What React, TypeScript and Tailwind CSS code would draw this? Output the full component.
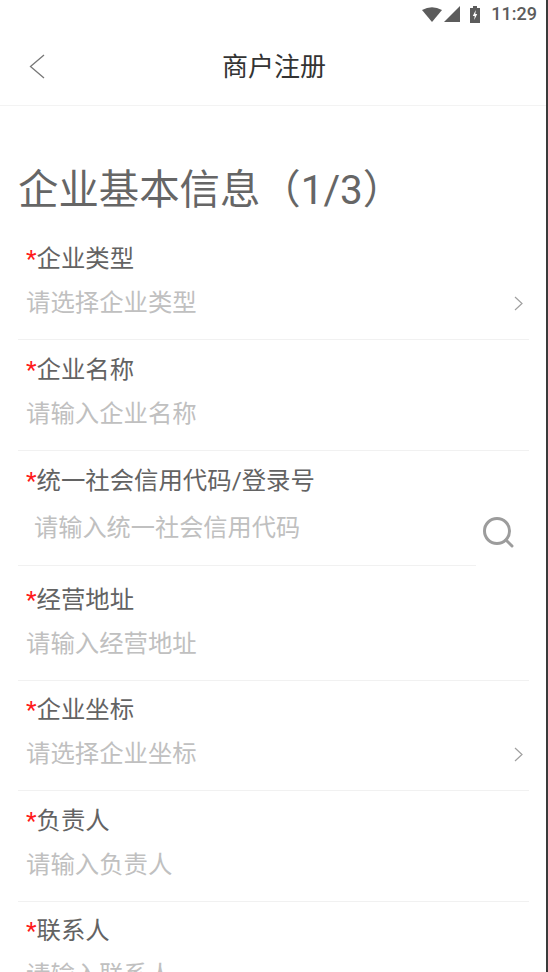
const fontStack = "font-['Roboto','Noto_Sans_CJK_SC',sans-serif]"

type Field = {
    label: string
    placeholder: string
    arrow?: boolean
}

const firstFields: Field[] = [
    { label: '企业类型', placeholder: '请选择企业类型', arrow: true },
    { label: '企业名称', placeholder: '请输入企业名称' },
]

const lastFields: Field[] = [
    { label: '经营地址', placeholder: '请输入经营地址' },
    { label: '企业坐标', placeholder: '请选择企业坐标', arrow: true },
    { label: '负责人', placeholder: '请输入负责人' },
    { label: '联系人', placeholder: '请输入联系人' },
]

function Label({ text }: { text: string }) {
    return (
        <div className="flex h-[32px] items-center pl-[8px] text-[24.4px] leading-[32px] text-[#636363]">
            <span className="text-[#ff1a1a]">*</span>
            {text}
        </div>
    )
}

function FormRow({ field }: { field: Field }) {
    return (
        <div className="h-[110.5px] border-b border-[#f1f1f1] pt-[13.5px]">
            <Label text={field.label} />
            <div className="mt-[12px] flex h-[32px] items-center justify-between pl-[8px] text-[24.4px] leading-[32px] text-[#c0c0c0]">
                <span>{field.placeholder}</span>
                {field.arrow && (
                    <svg width="9" height="15" viewBox="0 0 9 15" fill="none" stroke="#a0a0a0" strokeWidth="1.2" className="mr-[6px]">
                        <path d="M1 1 L8 7.5 L1 14" />
                    </svg>
                )}
            </div>
        </div>
    )
}

function StatusBar() {
    return (
        <div className="flex h-[28px] items-center justify-end pr-[9px] text-[#5c5c5c]">
            <svg width="20" height="15" viewBox="0 0 20 15">
                <path d="M0 3 Q10 -2.5 20 3 L10 15 Z" fill="currentColor" />
            </svg>
            <svg width="16" height="16" viewBox="0 0 16 16" className="ml-[2px]">
                <path d="M16 0 V16 H0 Z" fill="currentColor" />
            </svg>
            <svg width="10" height="17" viewBox="0 0 10 17" className="ml-[10px]">
                <path d="M3 0 H7 V2 H10 V17 H0 V2 H3 Z" fill="currentColor" />
                <path d="M5.8 4 L2.8 10 H4.7 L4.2 14 L7.2 8 H5.3 Z" fill="#ffffff" />
            </svg>
            <span className="ml-[11px] text-[18px] font-medium leading-none">11:29</span>
        </div>
    )
}

export default function App() {
    return (
        <div className={`${fontStack} h-[972px] w-[548px] overflow-hidden border-r-2 border-[#3a3a3a] bg-white`}>
            <StatusBar />

            {/* Header */}
            <div className="relative flex h-[78px] items-center justify-center border-b border-[#f3f3f3] pl-[2px] pt-[1px]">
                <svg width="16" height="25" viewBox="0 0 16 25" fill="none" stroke="#777777" strokeWidth="1.3" className="absolute left-[29px] top-[26px]">
                    <path d="M15 1 L1.5 12.5 L15 24" />
                </svg>
                <h1 className="text-[26px] font-normal leading-none text-[#333333]">商户注册</h1>
            </div>

            {/* Title */}
            <h2 className="mt-[57px] h-[56px] pl-[18px] text-[40.4px] font-normal leading-[56px] text-[#666666]">
                企业基本信息（1/3）
            </h2>

            <div className="ml-[18px] mr-[17px] mt-[10.5px]">
                {firstFields.map(field => (
                    <FormRow key={field.label} field={field} />
                ))}

                {/* Credit code, with search */}
                <div className="h-[119.5px] pt-[14.5px]">
                    <Label text="统一社会信用代码/登录号" />
                    <div className="flex items-start">
                        <div className="h-[69px] w-[458px] border-b border-[#f1f1f1] pl-[16px] pt-[15px] text-[24.2px] leading-[32px] text-[#c0c0c0]">
                            请输入统一社会信用代码
                        </div>
                        <svg width="32" height="32" viewBox="0 0 32 32" fill="none" stroke="#9c9c9c" strokeWidth="3" className="ml-[6px] mt-[19px]">
                            <circle cx="15" cy="15" r="12.5" />
                            <path d="M24 24 L30 30" strokeLinecap="round" />
                        </svg>
                    </div>
                </div>

                {lastFields.map(field => (
                    <FormRow key={field.label} field={field} />
                ))}
            </div>
        </div>
    )
}
